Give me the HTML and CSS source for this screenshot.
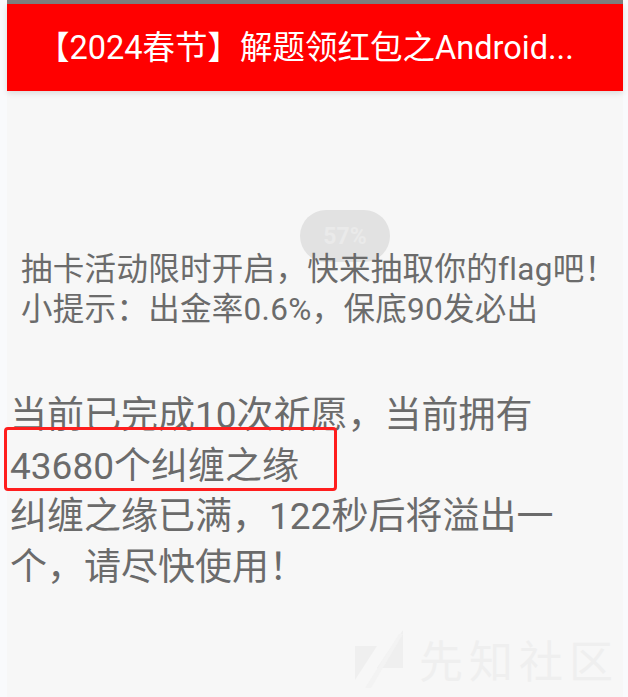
FILE: index.html
```html
<!DOCTYPE html>
<html lang="zh">
<head>
<meta charset="utf-8">
<link rel="stylesheet" href="styles.css">
</head>
<body>
<div class="screen">
  <div class="statusbar"></div>
  <header class="appbar">
    <h1 class="title">【2024春节】解题领红包之Android...</h1>
  </header>
  <main class="content">
    <div class="pill">57%</div>
    <p class="hint">抽卡活动限时开启，快来抽取你的flag吧！<br>小提示：出金率0.6%，保底90发必出</p>
    <p class="status">当前已完成10次祈愿，当前拥有<br><span class="mark">43680个纠缠之缘</span><br>纠缠之缘已满，122秒后将溢出一<br>个，请尽快使用！</p>
    <div class="watermark">
      <svg class="wm-logo" width="50" height="58" viewBox="0 0 50 58">
        <polygon points="0,16 22,16 0,50" fill="#efefef"/>
        <polygon points="48,0 48,38 22,38" fill="#efefef"/>
        <polygon points="10,58 44,4 48,4 16,58" fill="#f3f3f3"/>
      </svg>
      <span class="wm-text">先知社区</span>
    </div>
  </main>
</div>
</body>
</html>
```
FILE: styles.css
```css
html, body {
  margin: 0;
  padding: 0;
  background: #f9fafc;
  height: 100%;
}
body {
  font-family: Roboto, "Noto Sans CJK SC", sans-serif;
  overflow: hidden;
}
.screen {
  margin: 0 5px 0 7px;
  height: 697px;
  display: flex;
  flex-direction: column;
  background: #f7f7f7;
}
.statusbar {
  height: 4px;
  background: #7f807f;
  flex: none;
}
.appbar {
  height: 87px;
  background: #ff0000;
  display: flex;
  align-items: center;
  padding-left: 30px;
  flex: none;
  position: relative;
  z-index: 1;
  box-shadow: 0 2px 6px rgba(0,0,0,0.12);
}
.title {
  margin: 0;
  color: #ffffff;
  font-size: 32.5px;
  font-weight: 400;
  line-height: 1;
  padding-top: 1px;
  white-space: nowrap;
}
.content {
  position: relative;
  flex: 1;
  padding-top: 159px;
}
.pill {
  position: absolute;
  left: 293px;
  top: 119px;
  width: 90px;
  height: 52px;
  border-radius: 26px;
  background: #e2e2e2;
  color: #eaeaea;
  font-weight: 700;
  font-size: 23px;
  display: flex;
  align-items: center;
  justify-content: center;
}
.hint {
  position: relative;
  margin: 0 0 0 14px;
  color: #6b6b6b;
  font-size: 31.5px;
  line-height: 40px;
  letter-spacing: 0.3px;
  white-space: nowrap;
}
.status {
  margin: 61px 0 0 3px;
  color: #6b6b6b;
  font-size: 37px;
  line-height: 50.5px;
  white-space: nowrap;
}
.mark {
  position: relative;
}
.mark::after {
  content: "";
  position: absolute;
  left: -6px;
  top: -18px;
  width: 327px;
  height: 58px;
  border: 3px solid #ff1e1e;
  border-radius: 4px;
  z-index: 2;
}
.watermark {
  position: absolute;
  right: 4px;
  bottom: 6px;
  display: flex;
  align-items: center;
  gap: 14px;
}
.wm-text {
  color: #efefef;
  font-size: 44px;
  letter-spacing: 6px;
}
```
